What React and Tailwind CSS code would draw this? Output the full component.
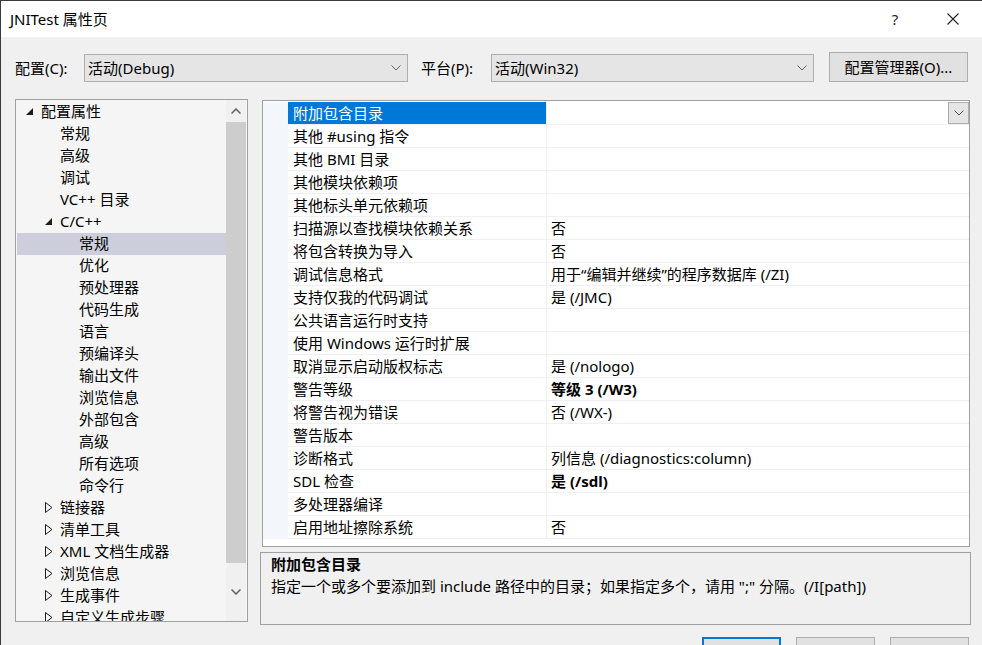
import React from "react";

const FONT = "font-['Segoe_UI','Noto_Sans','Noto_Sans_CJK_SC',sans-serif]";

function Chevron({ color = "#606060" }) {
  return (
    <svg width="10" height="6" viewBox="0 0 10 6">
      <path d="M0.5 0.5 L5 5 L9.5 0.5" fill="none" stroke={color} strokeWidth="1" />
    </svg>
  );
}

function ExpandedTri() {
  return (
    <svg width="7" height="7" viewBox="0 0 7 7">
      <polygon points="7,0 7,7 0,7" fill="#1e1e1e" />
    </svg>
  );
}

function CollapsedTri() {
  return (
    <svg width="8" height="11" viewBox="0 0 8 11">
      <polygon points="0.5,0.5 7,5.5 0.5,10.5" fill="none" stroke="#1e1e1e" strokeWidth="1" />
    </svg>
  );
}

const LEVEL_PAD = ["pl-[8px]", "pl-[27px]", "pl-[46px]"];

const treeItems = [
  { t: "配置属性", l: 0, e: "open" },
  { t: "常规", l: 1 },
  { t: "高级", l: 1 },
  { t: "调试", l: 1 },
  { t: "VC++ 目录", l: 1 },
  { t: "C/C++", l: 1, e: "open" },
  { t: "常规", l: 2, sel: true },
  { t: "优化", l: 2 },
  { t: "预处理器", l: 2 },
  { t: "代码生成", l: 2 },
  { t: "语言", l: 2 },
  { t: "预编译头", l: 2 },
  { t: "输出文件", l: 2 },
  { t: "浏览信息", l: 2 },
  { t: "外部包含", l: 2 },
  { t: "高级", l: 2 },
  { t: "所有选项", l: 2 },
  { t: "命令行", l: 2 },
  { t: "链接器", l: 1, e: "closed" },
  { t: "清单工具", l: 1, e: "closed" },
  { t: "XML 文档生成器", l: 1, e: "closed" },
  { t: "浏览信息", l: 1, e: "closed" },
  { t: "生成事件", l: 1, e: "closed" },
  { t: "自定义生成步骤", l: 1, e: "closed" },
];

const props = [
  ["附加包含目录", ""],
  ["其他 #using 指令", ""],
  ["其他 BMI 目录", ""],
  ["其他模块依赖项", ""],
  ["其他标头单元依赖项", ""],
  ["扫描源以查找模块依赖关系", "否"],
  ["将包含转换为导入", "否"],
  ["调试信息格式", "用于“编辑并继续”的程序数据库 (/ZI)"],
  ["支持仅我的代码调试", "是 (/JMC)"],
  ["公共语言运行时支持", ""],
  ["使用 Windows 运行时扩展", ""],
  ["取消显示启动版权标志", "是 (/nologo)"],
  ["警告等级", "等级 3 (/W3)", true],
  ["将警告视为错误", "否 (/WX-)"],
  ["警告版本", ""],
  ["诊断格式", "列信息 (/diagnostics:column)"],
  ["SDL 检查", "是 (/sdl)", true],
  ["多处理器编译", ""],
  ["启用地址擦除系统", "否"],
];

function Combo({ text, width }) {
  return (
    <div className={`${width} h-[28px] border border-[#adadad] bg-[#e5e5e5] flex items-center justify-between pl-[3px] pr-[6px]`}>
      <span className="leading-none">{text}</span>
      <Chevron />
    </div>
  );
}

export default function App() {
  return (
    <div className={`${FONT} w-[982px] h-[645px] overflow-hidden bg-[#f0f0f0] border-l border-t border-[#3a3a3a] text-[15px] text-black flex flex-col`}>
      {/* Title bar */}
      <div className="h-[36px] bg-white flex items-center justify-between pl-[9px] shrink-0">
        <span className="leading-none">JNITest 属性页</span>
        <div className="flex items-center h-full">
          <span className="w-[20px] text-center leading-none mr-[42px] text-[#222]">?</span>
          <svg width="12" height="12" viewBox="0 0 12 12" className="mr-[23px]">
            <path d="M0.5 0.5 L11.5 11.5 M11.5 0.5 L0.5 11.5" stroke="#222" strokeWidth="1.1" />
          </svg>
        </div>
      </div>

      {/* Toolbar */}
      <div className="flex items-end pl-[14px] pt-[15px] shrink-0">
        <div className="flex items-center h-[28px]">
          <span className="w-[69px] leading-none">配置(C):</span>
          <Combo text="活动(Debug)" width="w-[324px]" />
          <span className="w-[70px] ml-[13px] leading-none">平台(P):</span>
          <Combo text="活动(Win32)" width="w-[323px]" />
        </div>
        <div className="ml-[15px] w-[139px] h-[30px] border border-[#adadad] bg-[#e1e1e1] flex items-center justify-center leading-none">
          配置管理器(O)...
        </div>
      </div>

      {/* Main */}
      <div className="flex pl-[14px] mt-[17px]">
        {/* Tree */}
        <div className="w-[233px] h-[523px] border border-[#a0a0a0] bg-[#f5f5f5] flex p-[1px] pb-0 shrink-0">
          <div className="flex-1 overflow-hidden">
            {treeItems.map((it, i) => (
              <div
                key={i}
                className={`h-[22px] flex items-center pb-[2px] ${LEVEL_PAD[it.l]} ${it.sel ? "bg-[#cccedb]" : ""}`}
              >
                <span className="w-[16px] flex items-center pl-[1px] shrink-0">
                  {it.e === "open" && <ExpandedTri />}
                  {it.e === "closed" && <CollapsedTri />}
                </span>
                <span className="leading-none whitespace-nowrap">{it.t}</span>
              </div>
            ))}
          </div>
          <div className="w-[20px] flex flex-col bg-[#f0f0f0] -mt-[1px]">
            <div className="h-[22px] flex items-center justify-center">
              <svg width="10" height="6" viewBox="0 0 10 6">
                <path d="M0.5 5.5 L5 1 L9.5 5.5" fill="none" stroke="#606060" strokeWidth="1.5" />
              </svg>
            </div>
            <div className="h-[441px] bg-[#cdcdcd]" />
            <div className="flex-1 flex items-center justify-center">
              <svg width="10" height="6" viewBox="0 0 10 6">
                <path d="M0.5 0.5 L5 5 L9.5 0.5" fill="none" stroke="#606060" strokeWidth="1.5" />
              </svg>
            </div>
          </div>
        </div>

        {/* Right column */}
        <div className="ml-[12px] flex flex-col">
          {/* Property grid */}
          <div className="ml-[2px] mt-[1px] w-[708px] h-[447px] border border-[#a0a0a0] bg-white pt-[1px] overflow-hidden">
            {props.map(([name, val, bold], i) => (
              <div key={i} className="flex h-[23px]">
                <div className="w-[25px] bg-[#f3f6fb] shrink-0" />
                <div
                  className={`w-[259px] shrink-0 border-b border-r border-[#eef0f5] flex items-center pl-[5px] whitespace-nowrap ${
                    i === 0 ? "bg-[#0078d7] text-white" : ""
                  }`}
                >
                  <span className="leading-none">{name}</span>
                </div>
                <div className="flex-1 border-b border-[#eef0f5] flex items-center justify-between pl-[4px] whitespace-nowrap">
                  <span className={`leading-none ${bold ? "font-bold" : ""}`}>{val}</span>
                  {i === 0 && (
                    <div className="w-[21px] h-[22px] border border-[#adadad] bg-[#e5e5e5] flex items-center justify-center self-start">
                      <Chevron color="#505050" />
                    </div>
                  )}
                </div>
              </div>
            ))}
          </div>

          {/* Description */}
          <div className="mt-[5px] w-[711px] h-[73px] border border-[#a0a0a0] bg-[#f0f0f0] pl-[10px] pt-0">
            <div className="h-[22px] flex items-center font-bold leading-none">附加包含目录</div>
            <div className="h-[23px] flex items-center leading-none whitespace-nowrap">
              指定一个或多个要添加到 include 路径中的目录；如果指定多个，请用 ";" 分隔。(/I[path])
            </div>
          </div>

          {/* Buttons */}
          <div className="flex mt-[12px] pl-[442px] gap-[15px]">
            <div className="w-[79px] h-[30px] border-2 border-[#0078d7] bg-[#e1e1e1]" />
            <div className="w-[79px] h-[30px] border border-[#adadad] bg-[#e1e1e1]" />
            <div className="w-[79px] h-[30px] border border-[#adadad] bg-[#e1e1e1]" />
          </div>
        </div>
      </div>
    </div>
  );
}
